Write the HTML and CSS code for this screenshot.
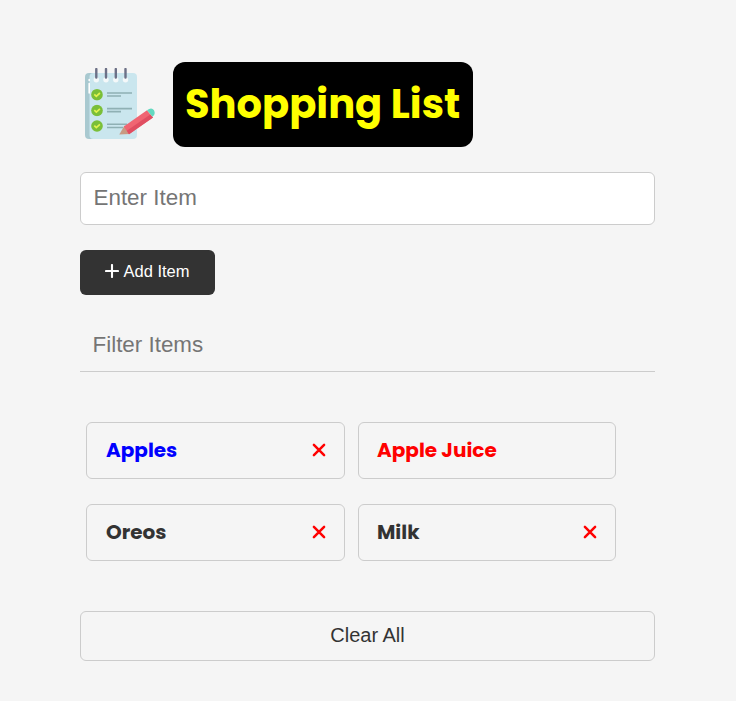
FILE: index.html
```html
<!DOCTYPE html>
<html lang="en">
<head>
<meta charset="utf-8">
<title>Shopping List</title>
<link rel="stylesheet" href="styles.css">
</head>
<body>
<svg class="defs" width="0" height="0">
  <symbol id="x" viewBox="0 0 14 14"><path d="M1.9 1.9 12.1 12.1M12.1 1.9 1.9 12.1"/></symbol>
  <symbol id="check" viewBox="0 0 12 12"><circle cx="6" cy="6" r="5.8" fill="#7abf38"/><path d="M3.300 5.700 5.300 7.600 8.900 4.300" fill="none" stroke="#e2f34e" stroke-width="1.7"/></symbol>
</svg>
<main class="container">
  <header class="header">
    <svg class="logo" viewBox="0 0 75 75">
      <rect x="5" y="5" width="30" height="66" rx="4" fill="#a9c9d0"/>
      <rect x="9.500" y="5" width="47.500" height="66" rx="4" fill="#cae6ee"/>
      <path d="M9.2 15.500v9.500M9.2 11.500v1" stroke="#fff" stroke-width="1.6" stroke-linecap="round"/>
      <g fill="#f4f8f9"><circle cx="16.3" cy="11.7" r="2.7"/><circle cx="26" cy="11.7" r="2.7"/><circle cx="35.8" cy="11.7" r="2.7"/><circle cx="45.5" cy="11.7" r="2.7"/></g>
      <path d="M16.3 1v8.500M26 1v8.500M35.8 1v8.500M45.5 1v8.500" stroke="#6c7086" stroke-width="2.4" stroke-linecap="round"/>
      <use href="#check" x="11" y="20.700" width="12" height="12"/>
      <use href="#check" x="11" y="36.5" width="12" height="12"/>
      <use href="#check" x="11" y="52" width="12" height="12"/>
      <path d="M27 25h25M27 28h14M27 40.6h25M27 43.6h14M27 56.3h20M27 59.5h16" stroke="#8fb0b4" stroke-width="1.6"/>
      <path d="M39.300 66.600 44.500 57.500 49.500 66z" fill="#c99a82"/>
      <path d="M43.800 58.500 67 42.300 73 49.500 49 66.300z" fill="#f06572"/>
      <path d="M46.800 62.800 70.300 46.500 73 49.500 49 66.300z" fill="#e04e61"/>
      <path d="M67 42.300q4.500-3.500 7 0 2 4-1.500 6.500z" fill="#63d9c0"/>
    </svg>
    <h1 class="title">Shopping List</h1>
  </header>
  <form class="form">
    <input class="field" type="text" placeholder="Enter Item">
    <button class="add" type="button"><svg class="plus" viewBox="0 0 14 14"><path d="M7 1v12M1 7h12"/></svg>Add Item</button>
  </form>
  <input class="filter" type="text" placeholder="Filter Items">
  <ul class="items">
    <li class="item blue">Apples<svg class="remove"><use href="#x"/></svg></li>
    <li class="item red">Apple Juice</li>
    <li class="item">Oreos<svg class="remove"><use href="#x"/></svg></li>
    <li class="item">Milk<svg class="remove"><use href="#x"/></svg></li>
  </ul>
  <button class="clear" type="button">Clear All</button>
</main>
</body>
</html>
```
FILE: styles.css
```css
* { box-sizing: border-box; margin: 0; padding: 0; }
body { background: #f5f5f5; color: #333; font-family: Poppins, Inter, sans-serif; }
.defs { display: block; }
.container { width: 575px; margin-left: 80px; padding-top: 62px; }
.header { display: flex; align-items: center; height: 85px; margin-bottom: 25px; }
.logo { width: 75px; height: 75px; margin: 1px 18px 0 0; flex: none; }
.title { width: 300px; height: 85px; padding-left: 12px; border-radius: 12px; background: #000; color: #ff0; font-size: 40px; font-weight: 700; line-height: 84px; white-space: nowrap; }
.form { display: flex; flex-direction: column; align-items: flex-start; gap: 25px; }
input, button { font-family: "Liberation Sans", Arial, sans-serif; }
input { width: 100%; font-size: 22.4px; outline: none; }
input::placeholder { color: #757575; }
.field { height: 53px; padding: 0 12.5px 2px; border: 1px solid #ccc; border-radius: 6px; background: #fff; }
.add { display: flex; align-items: center; justify-content: center; width: 135px; height: 45px; padding-bottom: 2px; border: 0; border-radius: 6px; background: #333; color: #fff; font-size: 16.5px; }
.plus { width: 14px; height: 14px; margin: -1px 4px 0 0; fill: none; stroke: #fff; stroke-width: 2.1; stroke-linecap: round; }
.filter { display: block; height: 54px; margin-top: 23px; padding: 1px 12.5px 0; border: 0; border-bottom: 1px solid #ccc; background: transparent; }
.items { display: grid; grid-template-columns: 259px 258px; gap: 25px 13px; margin: 50px 0 50px 6px; list-style: none; }
.item { display: flex; align-items: center; justify-content: space-between; height: 57px; padding: 0 18px 2px 19px; border: 1px solid #ccc; border-radius: 6px; font-size: 20px; font-weight: 700; }
.item:nth-child(even) { padding-left: 18px; }
.blue { color: #00f; }
.red { color: #f00; }
.remove { width: 14px; height: 14px; fill: none; stroke: #f00; stroke-width: 2.5; stroke-linecap: round; }
.clear { display: block; width: 100%; height: 50px; padding-bottom: 2px; border: 1px solid #ccc; border-radius: 6px; background: transparent; color: #333; font-size: 20px; }
```
